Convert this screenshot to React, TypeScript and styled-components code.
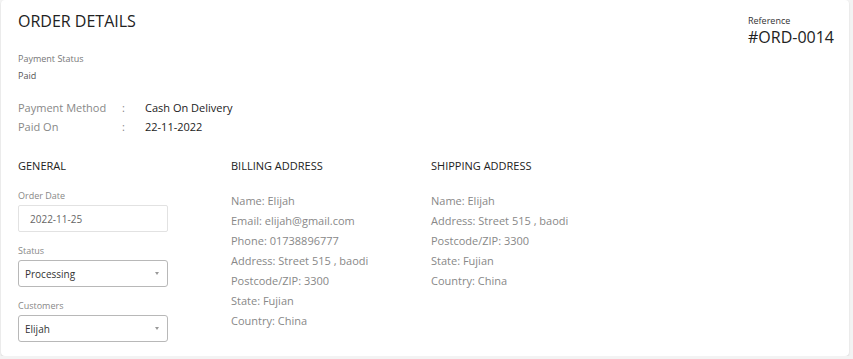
import styled, { createGlobalStyle } from "styled-components";

const GlobalStyle = createGlobalStyle`
  html, body {
    margin: 0;
    padding: 0;
    background: #f3f3f3;
    font-family: "Open Sans", "Liberation Sans", sans-serif;
  }
`;

const Card = styled.div`
  box-sizing: border-box;
  width: 848px;
  height: 356px;
  margin-left: 1px;
  padding: 11px 15px 0 17px;
  background: #ffffff;
  border-radius: 4px;
  box-shadow: 0 1px 2px rgba(0, 0, 0, 0.12);
`;

const Header = styled.div`
  display: flex;
  justify-content: space-between;
  align-items: flex-start;
`;

const Title = styled.h1`
  margin: 0;
  font-size: 16px;
  line-height: 20px;
  font-weight: 400;
  color: #222;
  text-transform: uppercase;
`;

const RefBlock = styled.div`
  display: flex;
  flex-direction: column;
  padding-top: 3px;
`;

const RefLabel = styled.span`
  font-size: 9px;
  line-height: 13px;
  color: #333;
`;

const RefValue = styled.span`
  font-size: 16px;
  line-height: 20px;
  color: #222;
`;

const StatusBlock = styled.div`
  margin-top: 21px;
  display: flex;
  flex-direction: column;
  gap: 3px;
`;

const SmallLabel = styled.span<{ $dark?: boolean }>`
  font-size: 9px;
  line-height: 14px;
  color: ${(p) => (p.$dark ? "#555" : "#777")};
`;

const InfoGrid = styled.div`
  margin-top: 15px;
  display: grid;
  grid-template-columns: 104px 23px auto;
  font-size: 11px;
  line-height: 19px;
`;

const InfoLabel = styled.span`
  color: #888;
`;

const InfoValue = styled.span`
  color: #222;
`;

const Columns = styled.div`
  margin-top: 22px;
  display: grid;
  grid-template-columns: 213px 200px 1fr;
`;

const Column = styled.div`
  display: flex;
  flex-direction: column;
`;

const ColumnTitle = styled.h2`
  margin: 0;
  font-size: 11px;
  line-height: 16px;
  font-weight: 400;
  color: #222;
  text-transform: uppercase;
`;

const Field = styled.div<{ $first?: boolean }>`
  display: flex;
  flex-direction: column;
  width: 150px;
  margin-top: ${(p) => (p.$first ? "15px" : "12px")};
  gap: 2px;
`;

const FieldLabel = styled.label`
  font-size: 9px;
  line-height: 14px;
  color: #888;
`;

const DateBox = styled.div`
  box-sizing: border-box;
  height: 27px;
  padding: 0 11px;
  display: flex;
  align-items: center;
  border: 1px solid #e2e2e2;
  border-radius: 2px;
  font-size: 10px;
  color: #666;
`;

const SelectBox = styled.div`
  box-sizing: border-box;
  height: 27px;
  padding: 0 8px 0 6px;
  display: flex;
  align-items: center;
  justify-content: space-between;
  border: 1px solid #b8b8b8;
  border-radius: 3px;
  font-size: 10px;
  color: #333;
`;

const Caret = styled.span`
  width: 0;
  height: 0;
  border-left: 2.5px solid transparent;
  border-right: 2.5px solid transparent;
  border-top: 3px solid #999;
`;

const AddressList = styled.div`
  margin-top: 17px;
  display: flex;
  flex-direction: column;
  font-size: 11px;
  line-height: 20px;
  color: #888;
`;

const billing = [
  "Name: Elijah",
  "Email: elijah@gmail.com",
  "Phone: 01738896777",
  "Address: Street 515 , baodi",
  "Postcode/ZIP: 3300",
  "State: Fujian",
  "Country: China",
];

const shipping = [
  "Name: Elijah",
  "Address: Street 515 , baodi",
  "Postcode/ZIP: 3300",
  "State: Fujian",
  "Country: China",
];

const Select = ({ value }: { value: string }) => (
  <SelectBox>
    <span>{value}</span>
    <Caret />
  </SelectBox>
);

export default function App() {
  return (
    <>
      <GlobalStyle />
      <Card>
        <Header>
          <div>
            <Title>Order Details</Title>
            <StatusBlock>
              <SmallLabel>Payment Status</SmallLabel>
              <SmallLabel $dark>Paid</SmallLabel>
            </StatusBlock>
          </div>
          <RefBlock>
            <RefLabel>Reference</RefLabel>
            <RefValue>#ORD-0014</RefValue>
          </RefBlock>
        </Header>

        <InfoGrid>
          <InfoLabel>Payment Method</InfoLabel>
          <InfoLabel>:</InfoLabel>
          <InfoValue>Cash On Delivery</InfoValue>
          <InfoLabel>Paid On</InfoLabel>
          <InfoLabel>:</InfoLabel>
          <InfoValue>22-11-2022</InfoValue>
        </InfoGrid>

        <Columns>
          <Column>
            <ColumnTitle>General</ColumnTitle>
            <Field $first>
              <FieldLabel>Order Date</FieldLabel>
              <DateBox>2022-11-25</DateBox>
            </Field>
            <Field>
              <FieldLabel>Status</FieldLabel>
              <Select value="Processing" />
            </Field>
            <Field>
              <FieldLabel>Customers</FieldLabel>
              <Select value="Elijah" />
            </Field>
          </Column>
          <Column>
            <ColumnTitle>Billing Address</ColumnTitle>
            <AddressList>
              {billing.map((line) => (
                <span key={line}>{line}</span>
              ))}
            </AddressList>
          </Column>
          <Column>
            <ColumnTitle>Shipping Address</ColumnTitle>
            <AddressList>
              {shipping.map((line) => (
                <span key={line}>{line}</span>
              ))}
            </AddressList>
          </Column>
        </Columns>
      </Card>
    </>
  );
}
